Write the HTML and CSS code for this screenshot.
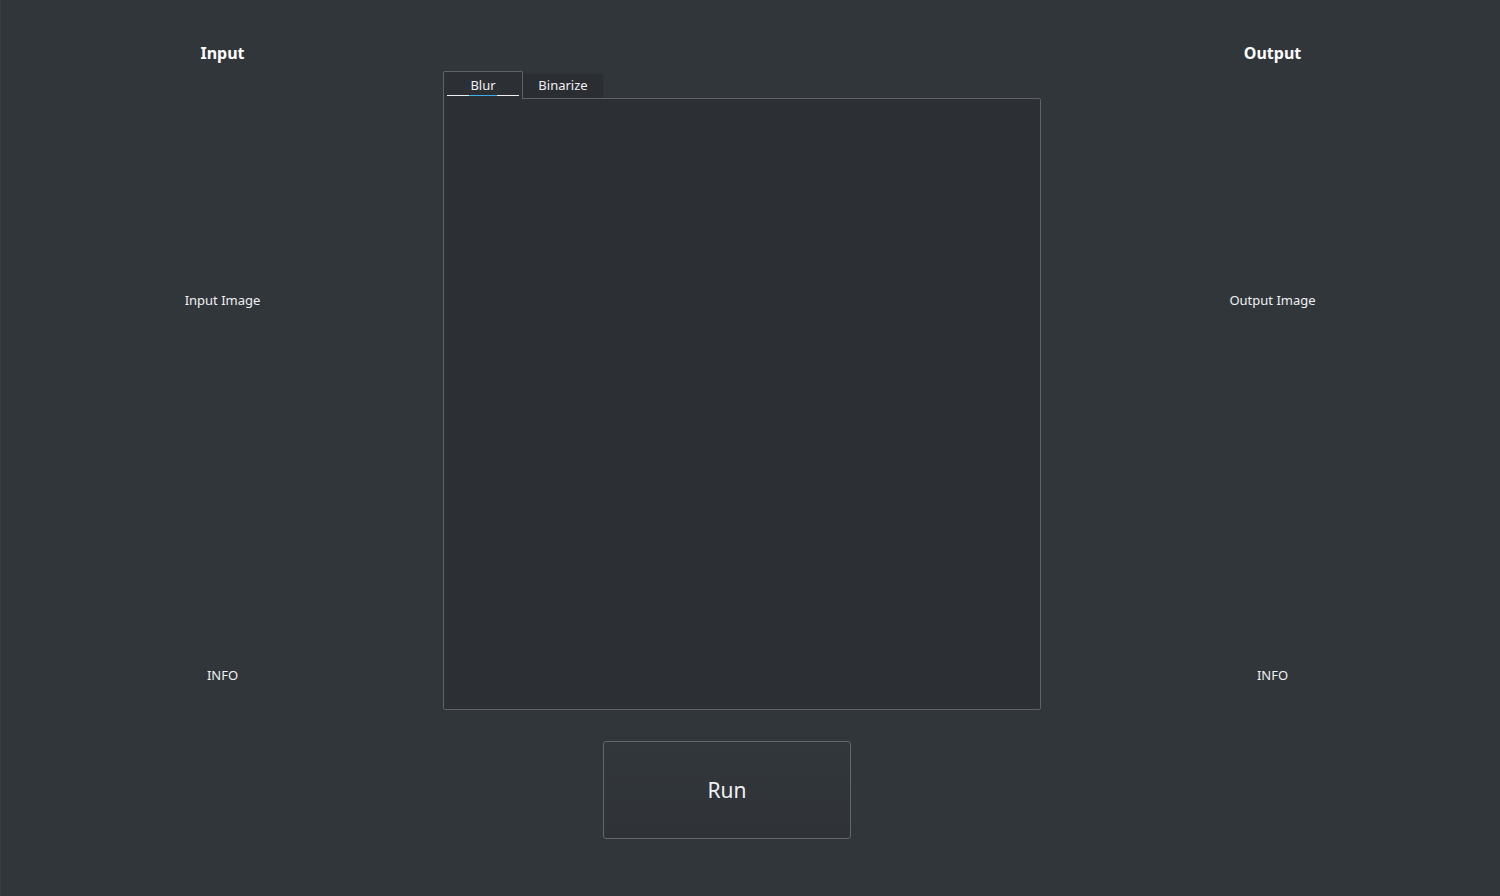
FILE: index.html
```html
<!DOCTYPE html>
<html lang="en">
<head>
<meta charset="utf-8">
<title>Image Tool</title>
<link rel="stylesheet" href="styles.css">
</head>
<body>
<div class="window">
  <section class="side side-left">
    <h2 class="side-title">Input</h2>
    <div class="image-area">Input Image</div>
    <div class="info-area">INFO</div>
  </section>
  <section class="center">
    <div class="tabbar">
      <div class="tab tab-active"><span class="tab-label">Blur</span><span class="focus-line"></span></div>
      <div class="tab tab-inactive"><span class="tab-label">Binarize</span></div>
    </div>
    <div class="pane"></div>
    <div class="run-row">
      <button class="run-btn">Run</button>
    </div>
  </section>
  <section class="side side-right">
    <h2 class="side-title">Output</h2>
    <div class="image-area">Output Image</div>
    <div class="info-area">INFO</div>
  </section>
</div>
</body>
</html>
```
FILE: styles.css
```css
html, body {
  margin: 0;
  padding: 0;
  height: 100%;
  background: #31363b;
}
body {
  font-family: "Noto Sans", "Open Sans", sans-serif;
  color: #eff0f1;
  overflow: hidden;
}
.window {
  display: grid;
  grid-template-columns: 443px 598px 1fr;
  height: 896px;
  box-shadow: inset 1px 0 0 #383d42;
}
.side {
  display: flex;
  flex-direction: column;
  align-items: stretch;
  padding-top: 40px;
}
.side-left { padding-left: 2px; }
.side-right { padding-left: 4px; }
.side-title {
  margin: 0;
  height: 26px;
  line-height: 26px;
  font-size: 16px;
  font-weight: 700;
  text-align: center;
  color: #fcfcfc;
}
.image-area {
  height: 468px;
  display: flex;
  align-items: center;
  justify-content: center;
  font-size: 13px;
}
.info-area {
  height: 282px;
  display: flex;
  align-items: center;
  justify-content: center;
  font-size: 13px;
}
.center {
  display: flex;
  flex-direction: column;
  padding-top: 71px;
}
.tabbar {
  display: flex;
  align-items: flex-end;
  height: 27px;
  position: relative;
  z-index: 1;
}
.tab {
  box-sizing: border-box;
  display: flex;
  justify-content: center;
  align-items: center;
  font-size: 13px;
  position: relative;
}
.tab-active {
  width: 80px;
  height: 28px;
  margin-bottom: -1px;
  background: #2c2f34;
  border: 1px solid #5f6368;
  border-bottom: none;
  border-radius: 2px 2px 0 0;
  padding-bottom: 2px;
}
.tab-inactive {
  width: 80px;
  height: 24px;
  background: #2a2d31;
  border-radius: 0 3px 0 0;
  padding-bottom: 3px;
}
.focus-line {
  position: absolute;
  left: 3px;
  right: 3px;
  bottom: 3px;
  height: 1px;
  background: linear-gradient(to right, #eff0f1 0, #eff0f1 22px, #3daee9 22px, #3daee9 50px, #eff0f1 50px);
}
.pane {
  box-sizing: border-box;
  height: 612px;
  background: #2c2f34;
  border: 1px solid #5f6368;
  border-radius: 0 2px 2px 2px;
}
.run-row {
  padding-top: 31px;
  padding-left: 160px;
}
.run-btn {
  box-sizing: border-box;
  width: 248px;
  height: 98px;
  font-family: "Noto Sans", "Open Sans", sans-serif;
  font-size: 21px;
  color: #eff0f1;
  background: linear-gradient(to bottom, #32373c, #2f3338);
  border: 1px solid #63676c;
  border-radius: 3px;
  padding: 0;
}
```
